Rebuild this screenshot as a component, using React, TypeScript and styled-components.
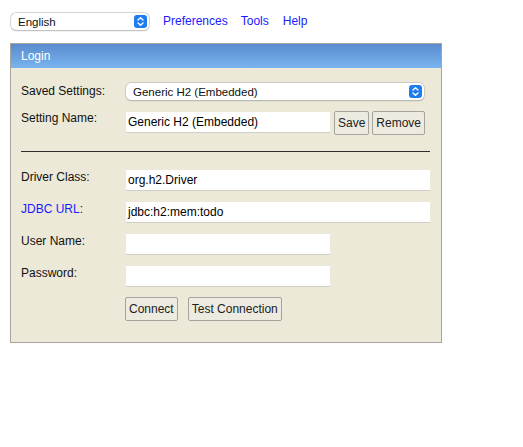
import React from "react";
import styled, { createGlobalStyle } from "styled-components";

const GlobalStyle = createGlobalStyle`
  html, body {
    margin: 0;
    padding: 0;
    background: #ffffff;
    font-family: "Liberation Sans", Arial, sans-serif;
    font-size: 12px;
    color: #000;
  }
`;

const Page = styled.div`
  padding: 13px 0 0 10px;
  width: 432px;
`;

const TopBar = styled.div`
  display: flex;
  align-items: center;
  height: 17px;
  padding-left: 1px;
  margin-bottom: 13px;
`;

const NavLink = styled.a`
  color: #1a1aff;
  text-decoration: none;
  font-size: 12px;
  margin-left: ${(p: { $gap: number }) => p.$gap}px;
  line-height: 17px;
`;

const SelectBox = styled.div<{ $width: number }>`
  position: relative;
  display: flex;
  align-items: center;
  box-sizing: border-box;
  width: ${(p) => p.$width}px;
  height: 17px;
  background: #fff;
  border-radius: 5px;
  box-shadow: 0 0 0 0.5px #b8b8b8, 0 0.5px 1.5px rgba(0, 0, 0, 0.25);
  padding-left: 7px;
  font-size: 11.5px;
  color: #111;
`;

const Chevron = styled.span`
  position: absolute;
  right: 2px;
  top: 2px;
  width: 13px;
  height: 13px;
  border-radius: 3px;
  background: #1d7cf2;
  display: flex;
  align-items: center;
  justify-content: center;
`;

const Panel = styled.div`
  border: 1px solid #a6a49c;
  background: #ece9d8;
`;

const PanelHeader = styled.div`
  height: 24px;
  line-height: 24px;
  padding-left: 10px;
  color: #fff;
  font-size: 12px;
  background: linear-gradient(#5a8bce, #79b4f0);
`;

const PanelBody = styled.div`
  padding: 15px 11px 21px 10px;
  display: flex;
  flex-direction: column;
`;

const Row = styled.div<{ $mt: number }>`
  display: grid;
  grid-template-columns: 105px 1fr;
  align-items: start;
  margin-top: ${(p) => p.$mt}px;
`;

const Label = styled.div`
  line-height: 15px;
  font-size: 12px;
  color: #111;
`;

const LabelLink = styled.a`
  color: #1a1aff;
  text-decoration: none;
`;

const Controls = styled.div`
  display: flex;
  align-items: flex-start;
`;

const TextInput = styled.div<{ $width: number }>`
  box-sizing: border-box;
  width: ${(p) => p.$width}px;
  height: 21px;
  background: #fff;
  border-bottom: 1px solid #cfcdc5;
  padding-left: 2px;
  line-height: 21px;
  font-size: 12px;
  color: #000;
  margin-top: 0;
`;

const Button = styled.div<{ $ml?: number }>`
  box-sizing: border-box;
  height: 24px;
  line-height: 22px;
  padding: 0 3px;
  border: 1px solid #a5a39b;
  border-radius: 2px;
  background: #edeadf;
  color: #222;
  font-size: 12px;
  margin-left: ${(p) => p.$ml ?? 0}px;
`;

const Rule = styled.div`
  height: 1px;
  background: #2e2e2e;
  margin-top: 16px;
`;

const UpDown = () => (
  <svg width="9" height="11" viewBox="0 0 9 11">
    <path
      d="M2 4 L4.5 1.8 L7 4 M2 7 L4.5 9.2 L7 7"
      fill="none"
      stroke="#fff"
      strokeWidth="1.4"
      strokeLinecap="round"
      strokeLinejoin="round"
    />
  </svg>
);

export default function App() {
  return (
    <>
      <GlobalStyle />
      <Page>
        <TopBar>
          <SelectBox $width={138}>
            English
            <Chevron>
              <UpDown />
            </Chevron>
          </SelectBox>
          <NavLink $gap={14}>Preferences</NavLink>
          <NavLink $gap={13}>Tools</NavLink>
          <NavLink $gap={14}>Help</NavLink>
        </TopBar>
        <Panel>
          <PanelHeader>Login</PanelHeader>
          <PanelBody>
            <Row $mt={0}>
              <Label style={{ lineHeight: "17px" }}>Saved Settings:</Label>
              <Controls>
                <SelectBox $width={298}>
                  Generic H2 (Embedded)
                  <Chevron>
                    <UpDown />
                  </Chevron>
                </SelectBox>
              </Controls>
            </Row>
            <Row $mt={11}>
              <Label>Setting Name:</Label>
              <Controls>
                <TextInput $width={204} style={{ marginTop: 1 }}>
                  Generic H2 (Embedded)
                </TextInput>
                <Button $ml={4}>Save</Button>
                <Button $ml={3}>Remove</Button>
              </Controls>
            </Row>
            <Rule />
            <Row $mt={18}>
              <Label>Driver Class:</Label>
              <TextInput $width={304}>org.h2.Driver</TextInput>
            </Row>
            <Row $mt={11}>
              <Label>
                <LabelLink>JDBC URL</LabelLink>:
              </Label>
              <TextInput $width={304}>jdbc:h2:mem:todo</TextInput>
            </Row>
            <Row $mt={11}>
              <Label>User Name:</Label>
              <TextInput $width={204} />
            </Row>
            <Row $mt={11}>
              <Label>Password:</Label>
              <TextInput $width={204} />
            </Row>
            <Row $mt={10}>
              <span />
              <Controls>
                <Button style={{ marginLeft: -1 }}>Connect</Button>
                <Button $ml={10}>Test Connection</Button>
              </Controls>
            </Row>
          </PanelBody>
        </Panel>
      </Page>
    </>
  );
}
